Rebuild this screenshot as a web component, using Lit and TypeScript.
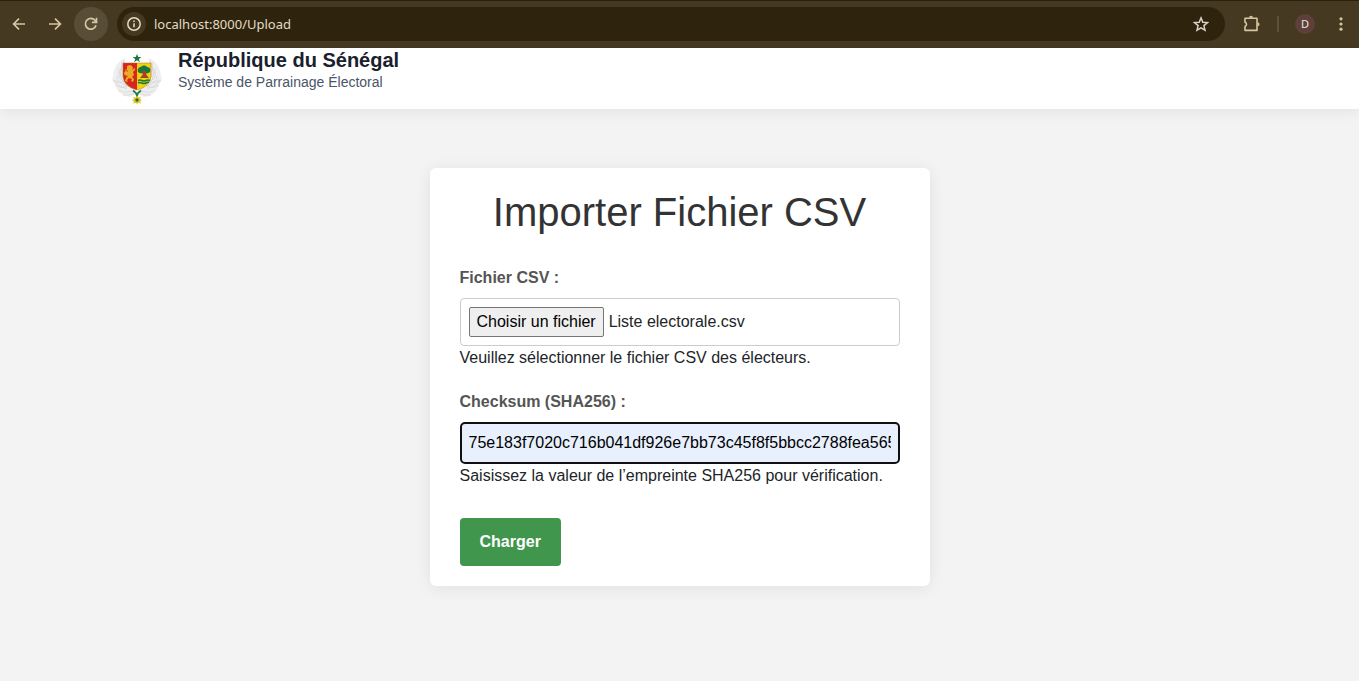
import { LitElement, html, css, svg } from "lit";
import { customElement, state } from "lit/decorators.js";

@customElement("browser-bar")
class BrowserBar extends LitElement {
  static styles = css`
    :host {
      display: block;
      background: #453921;
      border-top: 1px solid #2a200b;
      font-family: "Noto Sans", sans-serif;
      color: #d5c6a3;
    }
    .bar {
      display: flex;
      align-items: center;
      height: 47px;
      padding: 0 9px 1px 2px;
      box-sizing: border-box;
    }
    button {
      display: flex;
      align-items: center;
      justify-content: center;
      flex: none;
      width: 34px;
      height: 34px;
      padding: 0;
      border: 0;
      border-radius: 50%;
      background: none;
      color: inherit;
      font: inherit;
    }
    svg {
      display: block;
      width: 20px;
      height: 20px;
    }
    .nav {
      display: flex;
      gap: 2px;
      margin-right: 9px;
    }
    .nav .reload {
      background: #584d36;
    }
    .address {
      flex: 1;
      display: flex;
      align-items: center;
      height: 34px;
      padding: 0 7px 0 5px;
      border-radius: 17px;
      background: #2e240e;
      min-width: 0;
    }
    .address .info {
      width: 24px;
      height: 24px;
      background: #453921;
      color: #e6dcc6;
    }
    .address input {
      flex: 1;
      min-width: 0;
      padding: 0 8px;
      border: 0;
      outline: 0;
      background: none;
      color: #e4dac4;
      font-family: "Noto Sans", sans-serif;
      font-size: 13px;
      line-height: 20px;
    }
    .address .star {
      color: #d8d0c0;
    }
    .tools {
      display: flex;
      align-items: center;
      margin-left: 10px;
    }
    .sep {
      width: 2px;
      height: 16px;
      margin: 0 16px 0 8px;
      background: #5d5137;
    }
    .tools .avatar {
      width: 20px;
      height: 20px;
      margin-right: 9px;
      background: #5d4039;
      color: #f0e4e0;
      font-size: 11px;
      line-height: 20px;
    }
    .tools .menu {
      width: 34px;
      margin-right: -8px;
    }
  `;

  render() {
    return html`
      <div class="bar">
        <nav class="nav">
          <button aria-label="Précédent">
            <svg viewBox="0 0 20 20" fill="none" stroke="currentColor" stroke-width="1.7">
              <path d="M16 10H5M10 4.6 4.6 10l5.4 5.4" />
            </svg>
          </button>
          <button aria-label="Suivant">
            <svg viewBox="0 0 20 20" fill="none" stroke="currentColor" stroke-width="1.7">
              <path d="M4 10h11M10 4.6l5.4 5.4-5.4 5.4" />
            </svg>
          </button>
          <button class="reload" aria-label="Actualiser">
            <svg viewBox="0 0 20 20" fill="none" stroke="currentColor" stroke-width="1.7">
              <path d="M15 11.2A5.4 5.4 0 1 1 13.900 6.300L15.200 7.800M15.500 3.800v4.600h-4.600" />
            </svg>
          </button>
        </nav>
        <div class="address">
          <button class="info" aria-label="Informations sur le site">
            <svg viewBox="0 0 20 20" fill="none" stroke="currentColor" stroke-width="1.5">
              <circle cx="10" cy="10" r="6.200" />
              <path d="M10 9.300v4M10 6.600v1.500" />
            </svg>
          </button>
          <input type="text" aria-label="Adresse" value="localhost:8000/Upload" />
          <button class="star" aria-label="Ajouter aux favoris">
            <svg viewBox="0 0 20 20" fill="none" stroke="currentColor" stroke-width="1.500">
              <path
                d="m10 3.900 1.800 4.300 4.700.4-3.600 3 1.100 4.600-4-2.400-4 2.400 1.100-4.600-3.600-3 4.700-.4z"
              />
            </svg>
          </button>
        </div>
        <div class="tools">
          <button aria-label="Extensions">
            <svg viewBox="0 0 20 20" fill="none" stroke="currentColor" stroke-width="1.600" stroke-linejoin="round">
              <path d="M3 4.200h12v12.200H3v-4a2.200 2.200 0 0 0 0-4.200z" />
              <path
                d="M7 3.800a2 2 0 0 1 4 0zM15.500 8.200a2 2 0 0 1 0 4z"
                fill="currentColor"
                stroke="none"
              />
            </svg>
          </button>
          <span class="sep"></span>
          <button class="avatar" aria-label="Profil">D</button>
          <button class="menu" aria-label="Menu">
            <svg viewBox="0 0 20 20" fill="currentColor">
              <circle cx="10" cy="4.800" r="1.600" />
              <circle cx="10" cy="10" r="1.600" />
              <circle cx="10" cy="15.200" r="1.600" />
            </svg>
          </button>
        </div>
      </div>
    `;
  }
}

const feathers = [0, 1, 2, 3, 4, 5];

const wing = svg`
  <path d="M14 4C6 6 2 13 1 22c-1 3-1 6 2 8 1 7 7 12 15 13l6-3V36C17 34 13 28 12 20c0-6 0-12 2-16z" fill="#efefef"/>
  <g fill="none" stroke="#cfcfcf" stroke-width=".6">
    ${feathers.map(
      (i) => svg`<path d="M${12 - i * 1.6} ${6 + i * 4}q-3 ${9 - i} ${3 + i * 1.6} ${14 - i}"/>`
    )}
    <path d="M1 26q5 4 12 1M3 31q6 4 12 1M7 36q6 4 13 1M11 41q6 1 12-2M6 14q3 12 9 20M10 8q-2 14 6 24"/>
  </g>`;

@customElement("state-emblem")
class StateEmblem extends LitElement {
  static styles = css`
    :host {
      display: block;
    }
    svg {
      display: block;
      width: 50px;
      height: 50px;
    }
  `;

  render() {
    return html`
      <svg viewBox="0 0 50 50" role="img" aria-label="Armoiries du Sénégal">
        ${wing}
        <g transform="matrix(-1 0 0 1 50 0)">${wing}</g>
        <path d="m25 0 1.200 3h3.200l-2.600 2 1 3.200L25 6.300l-2.800 1.900 1-3.200-2.600-2h3.200z" fill="#16783f" />
        <path d="M11 9h14v27C17 34 11 29 11 21z" fill="#d8251d" />
        <path d="M25 9h14v12c0 8-6 13-14 15z" fill="#f2d20c" />
        <path d="M11 9h28v12c0 8-6 13-14 15-8-2-14-7-14-15z" fill="none" stroke="#b56b27" stroke-width=".5" />
        <path
          d="M15 12l3-1 2 1 1 2-1 2 3-2v2l-2 2 1 3-2 2 2 2-1 3-2-1 1-2-3-1-2 2 1 2-3-1 1-3 2-2-3-1-1-2 2-2 2 1-1-2z"
          fill="#e9ad25"
        />
        <path d="M14.500 22c-3-2-1-5 0-7M19 17l-2 4" fill="none" stroke="#e9ad25" stroke-width="1" />
        <path d="M26 18c-1-3 1-5 3-5 1-2 5-2 6 0 3 0 4 3 3 5-2 2-4 1-6 1s-4 1-6-1z" fill="#16783f" />
        <path d="M30.500 17h3.500l.5 4 2.500 3h-9l2.500-3z" fill="#a7402b" />
        <path d="M26 26.500q2-1 4 0t4 0 4 0M26 29q2-1 4 0t4 0 3-.5" fill="none" stroke="#16783f" stroke-width="1.500" />
        <path d="M21 36.500l3 2.500 1 3 1-3 3-2.500" fill="none" stroke="#267b4c" stroke-width="1.800" />
        <path
          d="m25 41.500 1.200 2 2.800-.8-1 2.300 2 1.200-2 1.200 1 2.200-2.800-.7L25 50l-1.200-1.100-2.800.7 1-2.200-2-1.200 2-1.200-1-2.300 2.800.8z"
          fill="#e9c52b"
        />
        <circle cx="25" cy="46" r="1.700" fill="#16783f" />
      </svg>
    `;
  }
}

@customElement("upload-form")
class UploadForm extends LitElement {
  @state() fileName = "Liste electorale.csv";

  static styles = css`
    :host {
      display: block;
      width: 100%;
      max-width: 500px;
    }
    .card {
      padding: 20px 30px;
      border-radius: 6px;
      background: #fff;
      box-shadow: 0 2px 16px rgba(0, 0, 0, 0.08);
    }
    h1 {
      margin: 0 0 30px;
      color: #333;
      font-size: 40px;
      line-height: 48px;
      font-weight: 400;
      text-align: center;
    }
    .group {
      margin-bottom: 20px;
    }
    .group:last-of-type {
      margin-bottom: 30px;
    }
    label {
      display: block;
      margin-bottom: 8px;
      color: #555;
      font-weight: 700;
    }
    .file {
      display: flex;
      align-items: center;
      gap: 5px;
      height: 48px;
      padding: 0 8px;
      box-sizing: border-box;
      border: 1px solid #ccc;
      border-radius: 4px;
    }
    .choose {
      height: 30px;
      padding: 0 7px;
      border: 1px solid #767676;
      border-radius: 2px;
      background: #efefef;
      color: #000;
      font: inherit;
    }
    .sum {
      display: block;
      width: 100%;
      height: 42px;
      padding: 0 7px;
      box-sizing: border-box;
      border: 2px solid #101010;
      border-radius: 5px;
      outline: 0;
      background: #e8f0fe;
      color: #000;
      font: inherit;
    }
    .hint {
      margin: 0;
    }
    .submit {
      display: block;
      height: 48px;
      padding: 0 20px;
      border: 0;
      border-radius: 4px;
      background: #3f964c;
      color: #fff;
      font: inherit;
      font-weight: 700;
    }
  `;

  private pick() {
    this.renderRoot.querySelector<HTMLInputElement>("#source")?.click();
  }

  private picked(e: Event) {
    const file = (e.target as HTMLInputElement).files?.[0];
    if (file) this.fileName = file.name;
  }

  render() {
    return html`
      <form class="card" @submit=${(e: Event) => e.preventDefault()}>
        <h1>Importer Fichier CSV</h1>
        <div class="group">
          <label for="choose">Fichier CSV :</label>
          <div class="file">
            <button id="choose" class="choose" type="button" @click=${this.pick}>Choisir un fichier</button>
            <output for="source">${this.fileName}</output>
            <input id="source" type="file" accept=".csv" hidden @change=${this.picked} />
          </div>
          <p class="hint">Veuillez sélectionner le fichier CSV des électeurs.</p>
        </div>
        <div class="group">
          <label for="sum">Checksum (SHA256) :</label>
          <input id="sum" class="sum" type="text" value="75e183f7020c716b041df926e7bb73c45f8f5bbcc2788fea565" />
          <p class="hint">Saisissez la valeur de l’empreinte SHA256 pour vérification.</p>
        </div>
        <button class="submit" type="submit">Charger</button>
      </form>
    `;
  }
}

@customElement("app-root")
class AppRoot extends LitElement {
  static styles = css`
    :host {
      display: flex;
      flex-direction: column;
      min-height: 100vh;
      background: #f3f3f3;
      color: #212529;
      font-family: "Liberation Sans", Arial, sans-serif;
      font-size: 16px;
      line-height: 24px;
    }
    .header {
      background: #fff;
      box-shadow: 0 4px 12px rgba(0, 0, 0, 0.06);
    }
    .inner {
      display: flex;
      gap: 16px;
      max-width: 1135px;
      height: 61px;
      margin: 0 auto;
    }
    .emblem {
      margin-top: 6px;
    }
    .name {
      margin: 0;
      color: #1a202c;
      font-size: 20px;
      line-height: 24px;
      font-weight: 700;
    }
    .tagline {
      margin: 0;
      color: #4a5568;
      font-size: 14px;
      line-height: 20px;
    }
    main {
      display: flex;
      justify-content: center;
      padding: 59px 16px;
    }
  `;

  render() {
    return html`
      <browser-bar></browser-bar>
      <header class="header">
        <div class="inner">
          <state-emblem class="emblem"></state-emblem>
          <div>
            <p class="name">République du Sénégal</p>
            <p class="tagline">Système de Parrainage Électoral</p>
          </div>
        </div>
      </header>
      <main><upload-form></upload-form></main>
    `;
  }
}
